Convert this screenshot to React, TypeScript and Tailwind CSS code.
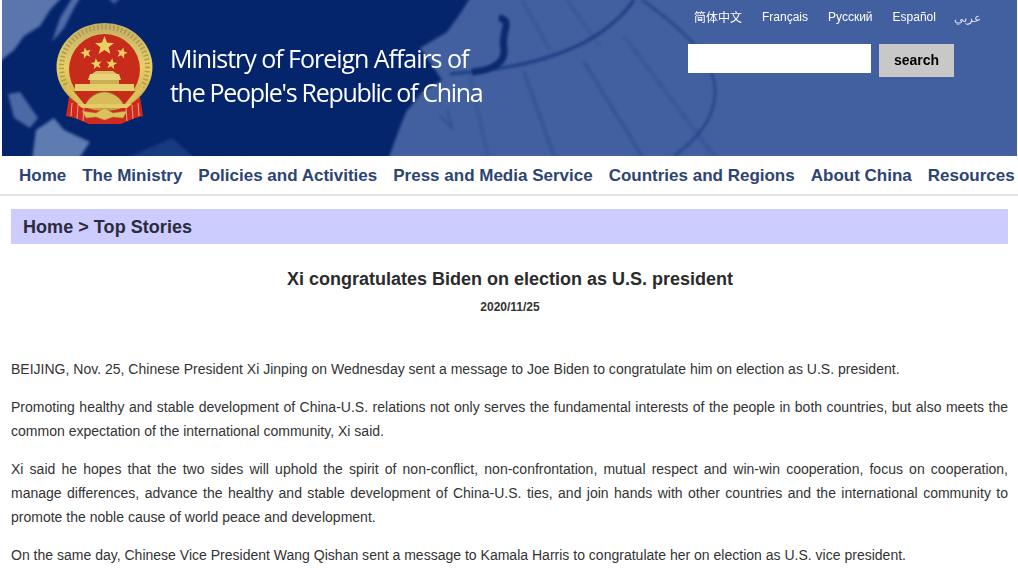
const NAV = ["Home", "The Ministry", "Policies and Activities", "Press and Media Service", "Countries and Regions", "About China", "Resources"];

function HeaderArt() {
  return (
    <svg className="absolute inset-0 h-full w-full" viewBox="0 0 1015 156" preserveAspectRatio="none">
      <defs>
        <filter id="soft"><feGaussianBlur stdDeviation="1.6" /></filter>
        <filter id="soft2"><feGaussianBlur stdDeviation="1.3" /></filter>
      </defs>
      <g filter="url(#soft)">
        {/* sea, right side of the globe */}
        <path d="M1020 -5H470L458 14L445 32L418 48L428 62L440 80L420 92L404 112L395 135L386 160H1020Z" fill="#42609f" />
        {/* top-left land */}
        <path d="M-5 64L12 50L22 36L38 26L48 10L62 -5H-5Z" fill="#5a76ad" />
        <path d="M50 42L62 28L72 8L80 -5H72L58 18Z" fill="#4f6ca8" />
        <path d="M103 -5L112 4L122 -5Z" fill="#3f5c9b" />
        {/* bottom-left land */}
        <path d="M6 94L18 92L36 118L28 128L12 118Z" fill="#4c69a6" />
        <path d="M34 130L52 118L62 130L88 142L76 160H30Z" fill="#5f7bb2" />
        <path d="M120 160L170 138L195 160Z" fill="#173a80" />
      </g>
      <g filter="url(#soft2)" fill="none" stroke="#1b3b83">
        <path d="M448 74C500 70 590 60 632 0" strokeWidth="3.5" opacity="0.8" />
        <path d="M497 18C512 20 498 34 502 48C504 62 492 70 470 72" strokeWidth="7" stroke="#0d2c6f" />
        <path d="M672 156C722 120 722 80 695 48C680 30 660 14 640 0" strokeWidth="3" opacity="0.6" />
        <path d="M522 72L552 156" strokeWidth="3" opacity="0.35" />
        <path d="M582 62L640 156" strokeWidth="3" opacity="0.35" />
        <path d="M622 36L712 156" strokeWidth="3" opacity="0.25" />
        <path d="M468 76L486 156" strokeWidth="3" opacity="0.25" />
        <path d="M520 0L548 50" strokeWidth="3" opacity="0.25" />
        <path d="M565 0L598 46" strokeWidth="3" opacity="0.25" />
        <path d="M438 116L450 128L445 110" strokeWidth="1.5" opacity="0.5" />
      </g>
    </svg>
  );
}

function Emblem() {
  const star = "M0 -10L2.6 -3.2L9.5 -3.1L4.1 1.2L5.9 8.1L0 4.1L-5.9 8.1L-4.1 1.2L-9.5 -3.1L-2.6 -3.2Z";
  return (
    <svg className="absolute left-[53px] top-[21px]" width="102" height="106" viewBox="0 0 102 106">
      <defs>
        <linearGradient id="gold" x1="0" x2="0" y1="0" y2="1">
          <stop offset="0" stopColor="#c4ae66" />
          <stop offset="0.5" stopColor="#e6cf6a" />
          <stop offset="1" stopColor="#c9a540" />
        </linearGradient>
      </defs>
      <path d="M14 76L11 95L20 97L34 103H66L80 97L88 95L85 76Z" fill="#cf2a1c" />
      <path d="M17 82L16 95M23 84L22 98M29 86L28 100M71 86L72 100M77 84L78 98M83 82L84 95" stroke="#f0a08a" strokeWidth="1" />
      <ellipse cx="49.5" cy="46" rx="48" ry="44" fill="url(#gold)" />
      <ellipse cx="49.5" cy="46" rx="43" ry="40" fill="none" stroke="#a08a3f" strokeWidth="5" strokeDasharray="1.5 2.5" opacity="0.7" />
      <circle cx="49.5" cy="48.5" r="35.5" fill="#c72c1b" />
      <path d="M33 59L35 53H64L66 59Z" fill="#e8d27a" />
      <path d="M37 53L41 50H58L62 53Z" fill="#dcc262" />
      <rect x="35" y="59" width="29" height="5" fill="#cbb052" />
      <rect x="20" y="63" width="59" height="7" fill="#e6cf6e" />
      <path d="M18 70H81L72 84H27Z" fill="#c72c1b" />
      <path d="M12 62L30 84H24L10 68ZM87 62L69 84H75L89 68Z" fill="#dcc05c" />
      <path d="M30 84C34 76 42 71 49.5 71C57 71 65 76 69 84Z" fill="#d9bb57" stroke="#8f7a38" strokeWidth="0.7" />
      <path d="M22 83H77L72 87H27Z" fill="#e4ca68" />
      <path d="M27 90L41 92L49.5 87L58 92L72 90L68 97L58 96L49.5 99L41 96L31 97Z" fill="#dcc05c" stroke="#a08a3f" strokeWidth="0.5" />
      <g fill="#e8d066">
        <path d={star} transform="translate(49.5 25) scale(1)" />
        <path d={star} transform="translate(31 32) scale(0.58) rotate(-15)" />
        <path d={star} transform="translate(41.5 43) scale(0.58) rotate(-8)" />
        <path d={star} transform="translate(56.5 43) scale(0.58) rotate(8)" />
        <path d={star} transform="translate(67 32) scale(0.58) rotate(15)" />
      </g>
    </svg>
  );
}

export default function App() {
  return (
    <div className="h-[568px] overflow-hidden bg-white font-['Liberation_Sans',Arial,sans-serif]">
      <header className="relative ml-[2px] h-[156px] w-[1015px] overflow-hidden bg-[#04246b]">
        <HeaderArt />
        <Emblem />
        <div className="absolute left-[168px] top-[41px] font-['Open_Sans',sans-serif] text-[25px] leading-[34px] text-white">
          <p className="tracking-[-1.03px]">Ministry of Foreign Affairs of</p>
          <p className="tracking-[-1.3px]">the People's Republic of China</p>
        </div>
        <div className="absolute left-[692px] top-[6px] flex items-center text-[12px] text-white">
          <span className="mr-[20px] font-['Noto_Sans_CJK_SC',sans-serif]">简体中文</span>
          <span className="mr-[20px]">Français</span>
          <span className="mr-[20px]">Русский</span>
          <span className="mr-[18px]">Español</span>
          <span className="mt-[3px] opacity-80" dir="rtl">عربي</span>
        </div>
        <div className="absolute left-[686px] top-[44px] flex items-start gap-[8px]">
          <div className="h-[29px] w-[183px] bg-white" />
          <button className="h-[33px] w-[75px] bg-[#c8c8c8] text-[14px] font-bold text-black">search</button>
        </div>
      </header>
      <nav className="flex h-[40px] items-center gap-[16px] whitespace-nowrap border-b-2 border-[#e0e4e8] pl-[19px] pt-[2px] text-[17px] font-bold text-[#2c4474]">
        {NAV.map((item) => (
          <span key={item}>{item}</span>
        ))}
      </nav>
      <main className="px-[11px] pt-[13px] text-[#333]">
        <div className="flex h-[35px] w-[997px] items-center bg-[#ccccff] pl-[12px] pt-[2px] text-[18px] font-bold tracking-[0.05px] text-[#2b2b3b]">Home &gt; Top Stories</div>
        <h1 className="mt-[23px] pl-[2px] text-center text-[18px] font-bold leading-[24px] text-[#2b2b2b]">Xi congratulates Biden on election as U.S. president</h1>
        <p className="mt-[8px] pl-[2px] text-center text-[12px] font-bold leading-[16px]">2020/11/25</p>
        <div className="mt-[42px] w-[997px] text-justify text-[14px] leading-[24px] tracking-[0.008px]">
          <p>BEIJING, Nov. 25, Chinese President Xi Jinping on Wednesday sent a message to Joe Biden to congratulate him on election as U.S. president.</p>
          <p className="mt-[14px]">Promoting healthy and stable development of China-U.S. relations not only serves the fundamental interests of the people in both countries, but also meets the common expectation of the international community, Xi said.</p>
          <p className="mt-[14px]">Xi said he hopes that the two sides will uphold the spirit of non-conflict, non-confrontation, mutual respect and win-win cooperation, focus on cooperation, manage differences, advance the healthy and stable development of China-U.S. ties, and join hands with other countries and the international community to promote the noble cause of world peace and development.</p>
          <p className="mt-[14px]">On the same day, Chinese Vice President Wang Qishan sent a message to Kamala Harris to congratulate her on election as U.S. vice president.</p>
        </div>
      </main>
    </div>
  );
}
